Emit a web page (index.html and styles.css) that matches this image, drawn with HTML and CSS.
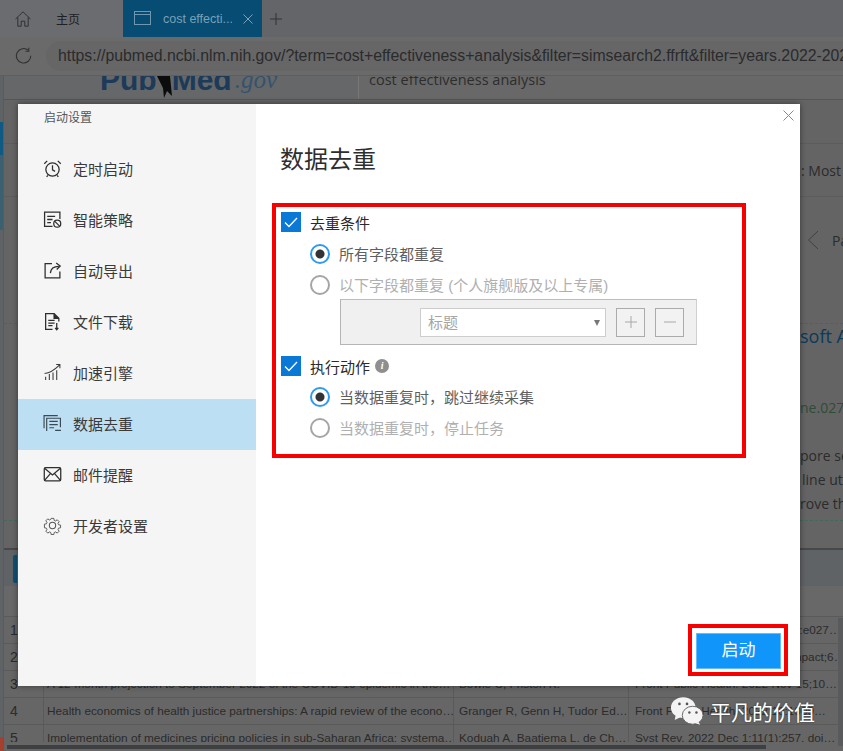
FILE: index.html
```html
<!DOCTYPE html>
<html lang="zh">
<head>
<meta charset="utf-8">
<title>数据去重</title>
<link rel="stylesheet" href="styles.css">
</head>
<body>
<div class="app">
  <header class="tabbar">
    <div class="tab-home">
      <svg class="home-icon" width="18" height="18" viewBox="0 0 18 18" fill="none" stroke="#2f3133" stroke-width="1"><path d="M1.500 9 9 1.800 16.500 9M3.800 7.200V16.200H7.200V11.200H10.800V16.200H14.200V7.200"/></svg>
      <span class="home-label">主页</span>
    </div>
    <div class="tab-active">
      <svg class="tab-ico" width="17" height="15" viewBox="0 0 17 15" fill="none" stroke="#6f97ad" stroke-width="1"><rect x=".5" y=".5" width="16" height="13"/><path d="M.5 3.500h16"/></svg>
      <span class="tab-title">cost effecti...</span>
      <svg class="tab-ico" width="10" height="10" viewBox="0 0 10 10" stroke="#7ea3b8" stroke-width="1"><path d="M.5.500l9 9M9.500.500l-9 9"/></svg>
    </div>
    <svg class="tab-plus" width="12" height="12" viewBox="0 0 12 12" stroke="#303234" stroke-width="1"><path d="M6 0v12M0 6h12"/></svg>
  </header>
  <div class="addressbar">
    <svg class="refresh" width="18" height="18" viewBox="0 0 18 18" fill="none" stroke="#2f3133" stroke-width="1.100"><path d="M15.800 8.800A7.200 7.200 0 1 1 13.400 3.400"/><path d="M13.800.8v3.400h-3.300"/></svg>
    <div class="url">https://pubmed.ncbi.nlm.nih.gov/?term=cost+effectiveness+analysis&amp;filter=simsearch2.ffrft&amp;filter=years.2022-2022</div>
  </div>
  <main class="page">
    <div class="page-strip">
      <div class="strip-mark"></div>
      <div class="strip-mark-2"></div>
      <div class="strip-red"></div>
    </div>
    <div class="page-body">
      <div class="page-top">
        <div class="logo">
          <span class="logo-pub">Pub</span>
          <svg class="logo-emblem" width="15" height="24" viewBox="0 0 15 24"><path d="M0 0h13l2 20-5-5-3 7-1-10z" fill="#0c0c0c"/></svg>
          <span class="logo-pub">Med</span>
          <span class="logo-gov">.gov</span>
        </div>
        <div class="searchbox">cost effectiveness analysis</div>
      </div>
      <div class="results">
        <div class="sort-row"><span>: Most</span></div>
        <div class="pager-row">
          <svg class="chevron" width="12" height="20" viewBox="0 0 12 20" fill="none" stroke="#3f4143" stroke-width="1"><path d="M11 1 1.500 10 11 19"/></svg>
          <span>Pa</span>
        </div>
        <div class="result-item">
          <div class="r-title">soft A</div>
          <div class="r-doi">ne.027</div>
          <div class="r-text"><span>pore se</span><span class="r-indent">line uti</span><span>rove th</span></div>
        </div>
      </div>
      <div class="table-area">
        <div class="table-toolbar"><div class="table-btn"></div></div>
        <div class="table-head"></div>
        <div class="row"><div class="c-num">1</div><div class="c-title"></div><div class="c-auth"></div><div class="c-src">PLoS One. 2022 Nov 17;17(11):e027…</div></div>
        <div class="row"><div class="c-num">2</div><div class="c-title"></div><div class="c-auth"></div><div class="c-src">J Med Econ. 2022 Dec;25(1):Impact;6…</div></div>
        <div class="row"><div class="c-num">3</div><div class="c-title">A 12-month projection to September 2022 of the COVID-19 epidemic in the…</div><div class="c-auth">Bowie C, Friston K.</div><div class="c-src">Front Public Health. 2022 Nov 15;10…</div></div>
        <div class="row"><div class="c-num">4</div><div class="c-title">Health economics of health justice partnerships: A rapid review of the econo…</div><div class="c-auth">Granger R, Genn H, Tudor Ed…</div><div class="c-src">Front Public Health. 2022;10:1009…</div></div>
        <div class="row row-cut"><div class="c-num">5</div><div class="c-title">Implementation of medicines pricing policies in sub-Saharan Africa: systema…</div><div class="c-auth">Koduah A, Baatiema L, de Ch…</div><div class="c-src">Syst Rev. 2022 Dec 1;11(1):257. doi…</div></div>
        <div class="scrollbar"></div>
        <div class="scrollbar-v"></div>
      </div>
    </div>
  </main>

  <section class="modal">
    <aside class="side">
      <div class="side-title">启动设置</div>
      <nav class="side-nav">
        <div class="nav-item">
          <svg class="nav-ico" viewBox="0 0 18 18" fill="none" stroke="#2e2e2e" stroke-width="1.200"><circle cx="9" cy="10" r="6.300"/><path d="M9 6v4.300l2.400 1.400M1.200 4.500 4 1.800M16.800 4.500 14 1.800M4.500 15.500 3.500 17M13.500 15.500l1 1.500"/></svg>
          <span>定时启动</span>
        </div>
        <div class="nav-item">
          <svg class="nav-ico" viewBox="0 0 18 18" fill="none" stroke="#2e2e2e" stroke-width="1.200"><path d="M9 15.500H1.500V2h14.500v6.500"/><path d="M4 6h7.500M4 9h5M4 12h3.500"/><circle cx="13.500" cy="13" r="3.300"/><path d="M11.200 10.800l4.600 4.500"/></svg>
          <span>智能策略</span>
        </div>
        <div class="nav-item">
          <svg class="nav-ico" viewBox="0 0 18 18" fill="none" stroke="#2e2e2e" stroke-width="1.200"><path d="M8.500 2.500H2v13.500h14V10"/><path d="M7 11.500c.3-4 3-6.500 8-6.500"/><path d="M12.500 1.800 16.300 4.800 13 8"/></svg>
          <span>自动导出</span>
        </div>
        <div class="nav-item">
          <svg class="nav-ico" viewBox="0 0 18 18" fill="none" stroke="#2e2e2e" stroke-width="1.200"><path d="M9 16.500H2.500V1.500h8l4.500 4.500v3"/><path d="M10.500 1.500V6H15" fill="#2e2e2e"/><path d="M5 8h6M5 10.500h6M5 13h4"/><path d="M13 10.500v6M11.500 15l1.500 1.800 1.500-1.800"/></svg>
          <span>文件下载</span>
        </div>
        <div class="nav-item">
          <svg class="nav-ico" viewBox="0 0 18 18" fill="none" stroke="#3a3a3a" stroke-width="1"><path d="M1.500 10C6 9.500 11 6.500 15.500 2M12.500 1.500h3.500V5"/><path d="M2.500 16v-3M6 16v-5.500M9.500 16V9M13 16V6.800"/></svg>
          <span>加速引擎</span>
        </div>
        <div class="nav-item nav-active">
          <svg class="nav-ico" viewBox="0 0 18 18" fill="none" stroke="#3a4a52" stroke-width="1.100"><path d="M1 13.500V1.500h13"/><path d="M3.500 16V4h13v8.500"/><path d="M6 7h8M6 10h8M6 13h4.500M11.500 15.500h5.500"/></svg>
          <span>数据去重</span>
        </div>
        <div class="nav-item">
          <svg class="nav-ico" viewBox="0 0 18 18" fill="none" stroke="#2e2e2e" stroke-width="1.200"><rect x="1.200" y="2.500" width="15.600" height="12.500" rx="1.200"/><path d="M1.500 3 9 9.500 16.500 3M1.500 14.500 7 8.200M16.500 14.500 11 8.200"/></svg>
          <span>邮件提醒</span>
        </div>
        <div class="nav-item">
          <svg class="nav-ico" viewBox="0 0 18 18" fill="none" stroke="#555" stroke-width="1"><circle cx="9" cy="9" r="3"/><path d="M7.600 1.500h2.800l.4 2.100 1.400.6 1.800-1.200 2 2-1.200 1.800.6 1.400 2.100.4v2.800l-2.100.4-.6 1.400 1.200 1.800-2 2-1.800-1.200-1.400.6-.4 2.100H7.600l-.4-2.100-1.400-.6-1.800 1.200-2-2 1.200-1.800-.6-1.400-2.100-.4V7.600l2.100-.4.6-1.400-1.200-1.800 2-2 1.800 1.200 1.400-.6z" transform="translate(.9 .9) scale(.9)"/></svg>
          <span>开发者设置</span>
        </div>
      </nav>
    </aside>
    <div class="content">
      <svg class="close" width="11" height="11" viewBox="0 0 11 11" stroke="#8a8a8a" stroke-width="1"><path d="M.5.500l10 10M10.500.500l-10 10"/></svg>
      <h1 class="heading">数据去重</h1>
      <div class="redbox options">
        <div class="check-row">
          <span class="check"><svg width="14" height="11" viewBox="0 0 14 11" fill="none" stroke="#fff" stroke-width="1.300"><path d="M1 5.500 5 9.500 13 1"/></svg></span>
          <span class="check-label">去重条件</span>
        </div>
        <div class="radio-row radio-first">
          <span class="radio radio-on"></span><span class="label-on">所有字段都重复</span>
        </div>
        <div class="radio-row">
          <span class="radio"></span><span class="label-off">以下字段都重复 (个人旗舰版及以上专属)</span>
        </div>
        <div class="fieldbox">
          <div class="select"><span>标题</span><i class="caret"></i></div>
          <div class="sq-btn"><svg width="12" height="12" viewBox="0 0 12 12" stroke="#a8a8a8" stroke-width="1"><path d="M6 0v12M0 6h12"/></svg></div>
          <div class="sq-btn"><svg width="12" height="12" viewBox="0 0 12 12" stroke="#a8a8a8" stroke-width="1"><path d="M0 6h12"/></svg></div>
        </div>
        <div class="check-row check-row-2">
          <span class="check"><svg width="14" height="11" viewBox="0 0 14 11" fill="none" stroke="#fff" stroke-width="1.300"><path d="M1 5.500 5 9.500 13 1"/></svg></span>
          <span class="check-label">执行动作</span>
          <span class="info">i</span>
        </div>
        <div class="radio-row radio-second">
          <span class="radio radio-on"></span><span class="label-on">当数据重复时，跳过继续采集</span>
        </div>
        <div class="radio-row">
          <span class="radio"></span><span class="label-off">当数据重复时，停止任务</span>
        </div>
      </div>
      <div class="footer">
        <div class="redbox start-box"><div class="start-btn">启动</div></div>
      </div>
    </div>
  </section>

  <div class="watermark">
    <svg class="wm-ico" width="34" height="30" viewBox="0 0 36 31"><ellipse cx="14" cy="12" rx="13" ry="11" fill="#f4f4f4"/><path d="M6 20l-1 5 6-3z" fill="#f4f4f4"/><ellipse cx="24" cy="20" rx="11" ry="9.500" fill="#f4f4f4" stroke="#666" stroke-width="1"/><path d="M30 27l2 3-5-1.500z" fill="#f4f4f4"/><circle cx="10" cy="8" r="1.400" fill="#555"/><circle cx="18" cy="8" r="1.400" fill="#555"/><circle cx="20.500" cy="17" r="1.300" fill="#555"/><circle cx="28" cy="17" r="1.300" fill="#555"/></svg>
    <span>平凡的价值</span>
  </div>
</div>
</body>
</html>
```
FILE: styles.css
```css
* { box-sizing: border-box; }
html, body { margin: 0; padding: 0; }
body { width: 843px; height: 751px; overflow: hidden; font-family: "Liberation Sans", "Noto Sans CJK SC", sans-serif; background: #636466; }
.app { position: relative; width: 843px; height: 751px; overflow: hidden; display: flex; flex-direction: column; }

.tabbar { height: 37px; flex: none; display: flex; align-items: center; background: #636568; }
.tab-home { width: 123px; height: 37px; flex: none; padding-left: 14px; display: flex; align-items: center; gap: 24px; background: #6a6c70; }
.home-icon { flex: none; }
.home-label { font-size: 12px; color: #1f2022; }
.tab-active { width: 139px; height: 37px; flex: none; padding: 0 10px 0 11px; display: flex; align-items: center; background: #064c73; color: #7ba0b5; font-size: 12.500px; }
.tab-ico { flex: none; }
.tab-title { margin: 0 11px 0 12px; width: 69px; flex: none; white-space: nowrap; overflow: hidden; }
.tab-plus { margin-left: 8px; flex: none; }

.addressbar { height: 39px; flex: none; display: flex; align-items: center; padding-left: 15px; gap: 13px; background: #6a6a6a; border-bottom: 1px solid #5e5e5e; overflow: hidden; }
.refresh { flex: none; }
.url { flex: none; height: 30px; width: 900px; padding-left: 12px; line-height: 30px; border-radius: 15px 0 0 15px; background: #666; color: #2a2b2c; font-size: 15.800px; white-space: nowrap; overflow: hidden; }

.page { flex: 1; display: flex; min-height: 0; background: #666768; }
.page-strip { width: 4px; flex: none; background: #5f6366; padding-top: 46px; border-right: 1px solid #5a5a5a; display: flex; flex-direction: column; }
.strip-mark { height: 33px; background: #0f5a85; }
.strip-mark-2 { height: 75px; background: #3d6070; }
.strip-red { height: 14px; margin-top: auto; background: #a5402f; }
.page-body { flex: 1; min-width: 0; display: flex; flex-direction: column; }

.page-top { height: 24px; flex: none; display: flex; padding-left: 96px; overflow: hidden; border-bottom: 1px solid #555; }
.logo { width: 258px; height: 30px; margin-top: -11px; white-space: nowrap; flex: none; line-height: 30px; display: flex; align-items: flex-start; }
.logo-pub { font-size: 30px; font-weight: bold; color: #1c3a59; }
.logo-emblem { flex: none; margin-top: 11px; }
.logo-gov { font-size: 25px; margin-left: 3px; font-family: "Liberation Serif", serif; font-style: italic; color: #33536f; }
.searchbox { flex: 1; padding: 0 0 0 10px; border-left: 1px solid #777; background: #686868; color: #2d2d2d; font-family: "Open Sans", sans-serif; font-size: 14.500px; line-height: 8px; overflow: hidden; white-space: nowrap; }

.results { height: 448px; flex: none; padding-top: 43px; display: flex; flex-direction: column; color: #2b2b2b; font-family: "Open Sans", sans-serif; font-size: 14px; background: #646464; }
.sort-row { width: 100%; height: 54px; flex: none; padding-left: 797px; display: flex; align-items: center; border-top: 1px solid #5c5c5c; border-bottom: 1px solid #5c5c5c; white-space: nowrap; overflow: hidden; }
.pager-row { width: 100%; height: 86px; flex: none; display: flex; align-items: center; padding-left: 803px; gap: 13px; white-space: nowrap; overflow: hidden; }
.chevron { flex: none; }
.result-item { width: 100%; height: 198px; flex: none; margin-top: 40px; padding-left: 796px; border-top: 1px dashed #3f6a5c; border-bottom: 1px dashed #3f6a5c; white-space: nowrap; overflow: hidden; }
.r-title { font-size: 18px; line-height: 22px; color: #0b3a5b; margin-top: 1px; }
.r-doi { font-size: 14px; line-height: 16px; color: #2f4c38; margin-top: 53px; }
.r-text { display: flex; flex-direction: column; font-size: 14px; line-height: 24px; margin-top: 28px; }
.r-indent { padding-left: 2px; }

.table-area { position: relative; flex: 1; min-height: 0; overflow: hidden; background: #666; border-top: 2px solid #484848; font-size: 11.800px; color: #2b2b2b; }
.table-toolbar { height: 36px; padding: 5px 0 0 9px; background: #606366; }
.table-btn { width: 4px; height: 28px; background: #104f74; border-radius: 2px 0 0 2px; }
.table-head { height: 31px; background: #686868; border-bottom: 1px solid #5a5a5a; }
.row { display: flex; height: 27px; border-bottom: 1px solid #5a5a5a; white-space: nowrap; line-height: 26px; overflow: hidden; }
.row-cut { height: 17px; border-bottom: 0; }
.c-num { width: 40px; flex: none; padding-left: 6px; border-right: 1px solid #5a5a5a; font-size: 14px; }
.c-title { width: 410px; flex: none; padding-left: 3px; border-right: 1px solid #5a5a5a; overflow: hidden; }
.c-auth { width: 175px; flex: none; padding-left: 5px; border-right: 1px solid #5a5a5a; overflow: hidden; }
.c-src { flex: 1; padding-left: 6px; overflow: hidden; }
.scrollbar { position: absolute; left: 3px; bottom: 2px; width: 759px; height: 4px; background: #3e3f40; }
.scrollbar-v { position: absolute; right: 0; top: 68px; width: 5px; height: 128px; background: #585a5c; }

.modal { position: absolute; left: 18px; top: 104px; width: 782px; height: 582px; display: flex; background: #fff; box-shadow: 0 0 6px rgba(0,0,0,.45); }
.side { width: 238px; flex: none; background: #f5f5f5; }
.side-title { height: 40px; padding: 6px 0 0 26px; font-size: 12px; line-height: 16px; color: #555; }
.side-nav { display: flex; flex-direction: column; }
.nav-item { height: 51px; display: flex; align-items: center; padding: 0 0 2px 25px; gap: 11px; font-size: 15px; color: #3a3a3a; }
.nav-active { background: #bddff3; }
.nav-ico { width: 19px; height: 19px; flex: none; }

.content { position: relative; flex: 1; min-width: 0; padding: 40px 0 0 16px; display: flex; flex-direction: column; }
.close { position: absolute; top: 6px; right: 6px; }
.heading { margin: 0 0 0 8px; height: 32px; font-size: 24px; line-height: 32px; font-weight: 400; color: #2e2e2e; }
.redbox { border: 4px solid #f70000; }
.options { margin-top: 27px; width: 474px; height: 255px; flex: none; padding: 2px 0 0 5px; }
.check-row { display: flex; align-items: center; height: 26px; }
.check-row-2 { margin-top: 8px; }
.check { width: 20px; height: 20px; flex: none; display: flex; align-items: center; justify-content: center; background: #0a78d7; margin-right: 9px; }
.check-label { font-size: 15px; color: #2a2a2a; }
.info { width: 14px; height: 14px; margin-left: 5px; border-radius: 50%; background: #8f8f8f; color: #fff; font: italic bold 10px/14px "Liberation Serif", serif; text-align: center; }
.radio-row { display: flex; align-items: center; height: 31px; padding-left: 29px; font-size: 15px; }
.radio-first { margin-top: 3px; }
.radio-second { margin-top: 2px; }
.radio { width: 20px; height: 20px; flex: none; margin-right: 9px; border-radius: 50%; border: 2px solid #a5a5a5; background: #fff; }
.radio-on { border-color: #2f9bef; background: radial-gradient(circle, #333 0 4px, #fff 5px); }
.label-on { color: #5f5f5f; }
.label-off { color: #b0b0b0; }
.fieldbox { display: flex; align-items: center; width: 357px; height: 46px; margin: -1px 0 0 59px; padding-left: 79px; background: #f0f0f0; border: 1px solid #b5b5b5; border-right-color: #d0d0d0; border-top-color: #bcbcbc; }
.select { position: relative; width: 186px; height: 29px; margin-right: 10px; padding-left: 7px; line-height: 27px; background: #fff; border: 1px solid #cdcdcd; font-size: 15px; color: #a5a5a5; }
.caret { position: absolute; right: 5px; top: 11px; width: 0; height: 0; border-left: 3px solid transparent; border-right: 3px solid transparent; border-top: 6px solid #777; }
.sq-btn { width: 29px; height: 29px; margin-right: 10px; display: flex; align-items: center; justify-content: center; background: #f2f2f3; border: 1px solid #ababab; }
.footer { margin-top: 166px; padding-left: 416px; }
.start-box { width: 100px; height: 52px; padding: 5px 0 0 4px; }
.start-btn { width: 85px; height: 36px; background: #1096fb; border: 1px solid #62bbff; color: #fff; font-size: 17px; line-height: 34px; text-align: center; }

.watermark { position: absolute; left: 670px; top: 696px; display: flex; align-items: center; gap: 6px; color: #fff; font-size: 21px; text-shadow: 0 0 2px #333; white-space: nowrap; }
.wm-ico { flex: none; }
```
